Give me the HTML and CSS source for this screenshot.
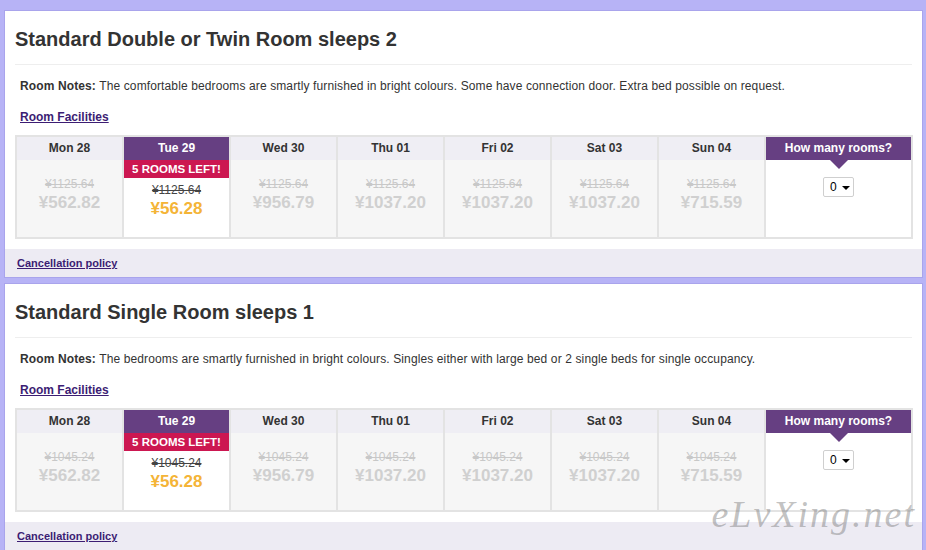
FILE: index.html
```html
<!DOCTYPE html>
<html>
<head>
<meta charset="utf-8">
<link rel="stylesheet" href="styles.css">
</head>
<body>
<div class="page">
  <section class="card">
    <h2 class="title">Standard Double or Twin Room sleeps 2</h2>
    <p class="notes"><b>Room Notes:</b> The comfortable bedrooms are smartly furnished in bright colours. Some have connection door. Extra bed possible on request.</p>
    <a class="facilities" href="#">Room Facilities</a>
    <div class="grid">
      <div class="col"><div class="day">Mon 28</div><div class="cell"><s class="was">¥1125.64</s><span class="price">¥562.82</span></div></div>
      <div class="col sel"><div class="day">Tue 29</div><div class="left">5 ROOMS LEFT!</div><div class="cell"><s class="was">¥1125.64</s><span class="price">¥56.28</span></div></div>
      <div class="col"><div class="day">Wed 30</div><div class="cell"><s class="was">¥1125.64</s><span class="price">¥956.79</span></div></div>
      <div class="col"><div class="day">Thu 01</div><div class="cell"><s class="was">¥1125.64</s><span class="price">¥1037.20</span></div></div>
      <div class="col"><div class="day">Fri 02</div><div class="cell"><s class="was">¥1125.64</s><span class="price">¥1037.20</span></div></div>
      <div class="col"><div class="day">Sat 03</div><div class="cell"><s class="was">¥1125.64</s><span class="price">¥1037.20</span></div></div>
      <div class="col"><div class="day">Sun 04</div><div class="cell"><s class="was">¥1125.64</s><span class="price">¥715.59</span></div></div>
      <div class="col rooms"><div class="day">How many rooms?</div><div class="cell"><span class="select">0<i class="caret"></i></span></div></div>
    </div>
    <div class="band"><a href="#">Cancellation policy</a></div>
  </section>

  <section class="card">
    <h2 class="title">Standard Single Room sleeps 1</h2>
    <p class="notes"><b>Room Notes:</b> The bedrooms are smartly furnished in bright colours. Singles either with large bed or 2 single beds for single occupancy.</p>
    <a class="facilities" href="#">Room Facilities</a>
    <div class="grid">
      <div class="col"><div class="day">Mon 28</div><div class="cell"><s class="was">¥1045.24</s><span class="price">¥562.82</span></div></div>
      <div class="col sel"><div class="day">Tue 29</div><div class="left">5 ROOMS LEFT!</div><div class="cell"><s class="was">¥1045.24</s><span class="price">¥56.28</span></div></div>
      <div class="col"><div class="day">Wed 30</div><div class="cell"><s class="was">¥1045.24</s><span class="price">¥956.79</span></div></div>
      <div class="col"><div class="day">Thu 01</div><div class="cell"><s class="was">¥1045.24</s><span class="price">¥1037.20</span></div></div>
      <div class="col"><div class="day">Fri 02</div><div class="cell"><s class="was">¥1045.24</s><span class="price">¥1037.20</span></div></div>
      <div class="col"><div class="day">Sat 03</div><div class="cell"><s class="was">¥1045.24</s><span class="price">¥1037.20</span></div></div>
      <div class="col"><div class="day">Sun 04</div><div class="cell"><s class="was">¥1045.24</s><span class="price">¥715.59</span></div></div>
      <div class="col rooms"><div class="day">How many rooms?</div><div class="cell"><span class="select">0<i class="caret"></i></span></div></div>
    </div>
    <div class="band"><a href="#">Cancellation policy</a></div>
  </section>
</div>
<div class="watermark">eLvXing.net</div>
</body>
</html>
```
FILE: styles.css
```css
html, body {
  margin: 0;
  padding: 0;
}
body {
  background: #b7b3f6;
  font-family: "Liberation Sans", Arial, sans-serif;
  color: #333;
  height: 550px;
  overflow: hidden;
  position: relative;
}
.page {
  padding: 10px 3px 0 4px;
  display: flex;
  flex-direction: column;
  gap: 5px;
}
.card {
  background: #fff;
  border: 1px solid #a9a4ec;
  display: flex;
  flex-direction: column;
}
.title {
  margin: 0 10px;
  padding: 16px 0 13px;
  font-size: 20px;
  line-height: 24px;
  font-weight: bold;
  color: #333;
  border-bottom: 1px solid #eeeeee;
}
.notes {
  margin: 13px 10px 0 15px;
  font-size: 12px;
  line-height: 16px;
  letter-spacing: 0.12px;
  color: #333;
}
.facilities {
  margin: 15px 0 0 15px;
  align-self: flex-start;
  font-size: 12px;
  line-height: 16px;
  font-weight: bold;
  color: #3c1d73;
  text-decoration: underline;
}
.grid {
  margin: 10px 0 0 10px;
  align-self: flex-start;
  display: grid;
  grid-template-columns: repeat(7, 105px) 145px;
  gap: 2px;
  padding: 2px;
  background: #e3e3e3;
}
.col {
  display: flex;
  flex-direction: column;
  height: 100px;
  background: #f6f6f6;
}
.day {
  height: 23px;
  line-height: 22px;
  text-align: center;
  font-size: 12px;
  font-weight: bold;
  color: #333;
  background: #efeef4;
}
.cell {
  flex: 1;
  display: flex;
  flex-direction: column;
  align-items: center;
  padding-top: 17px;
}
.was {
  font-size: 12px;
  line-height: 15px;
  color: #c8c8c8;
}
.price {
  font-size: 17px;
  line-height: 22px;
  font-weight: bold;
  color: #d0d0d0;
}
.sel {
  background: #fff;
}
.sel .day {
  background: #663f82;
  color: #fff;
}
.left {
  height: 18px;
  line-height: 18px;
  background: #cc1751;
  color: #fff;
  font-size: 11.5px;
  font-weight: bold;
  text-align: center;
}
.sel .cell {
  padding-top: 5px;
}
.sel .was {
  color: #444;
}
.sel .price {
  color: #f4b437;
}
.rooms {
  background: #fff;
}
.rooms .day {
  background: #663f82;
  color: #fff;
  position: relative;
}
.rooms .day::after {
  content: "";
  position: absolute;
  left: 50%;
  top: 23px;
  margin-left: -9px;
  border-left: 9px solid transparent;
  border-right: 9px solid transparent;
  border-top: 9px solid #663f82;
}
.rooms .cell {
  padding-top: 17px;
}
.select {
  display: flex;
  align-items: center;
  box-sizing: border-box;
  width: 31px;
  height: 20px;
  padding-left: 6px;
  border: 1px solid #cfcfcf;
  border-radius: 2px;
  font-size: 12px;
  color: #000;
  background: #fff;
}
.caret {
  margin-left: 5px;
  width: 0;
  height: 0;
  border-left: 4px solid transparent;
  border-right: 4px solid transparent;
  border-top: 4px solid #000;
  margin-top: 2px;
}
.band {
  margin-top: 10px;
  height: 28px;
  line-height: 26px;
  background: #edebf3;
  padding-left: 12px;
}
.band a {
  font-size: 11px;
  font-weight: bold;
  color: #3c1d73;
  text-decoration: underline;
}
.watermark {
  position: absolute;
  right: 10px;
  top: 492px;
  font-family: "Liberation Serif", serif;
  font-style: italic;
  font-size: 38px;
  letter-spacing: 2px;
  color: rgba(120, 120, 120, 0.45);
}
```
